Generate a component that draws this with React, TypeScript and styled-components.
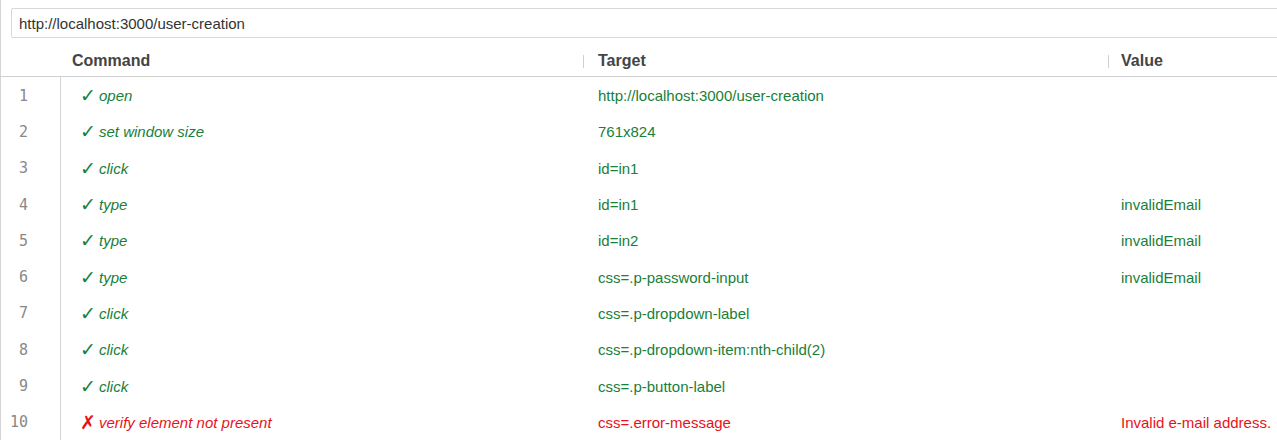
import React from 'react';
import styled, { createGlobalStyle } from 'styled-components';

const GlobalStyle = createGlobalStyle`
  html, body {
    margin: 0;
    padding: 0;
    background: #fff;
    font-family: "Liberation Sans", Arial, sans-serif;
    overflow: hidden;
  }
`;

type Step = {
  command: string;
  target: string;
  value?: string;
  failed?: boolean;
};

const steps: Step[] = [
  { command: 'open', target: 'http://localhost:3000/user-creation' },
  { command: 'set window size', target: '761x824' },
  { command: 'click', target: 'id=in1' },
  { command: 'type', target: 'id=in1', value: 'invalidEmail' },
  { command: 'type', target: 'id=in2', value: 'invalidEmail' },
  { command: 'type', target: 'css=.p-password-input', value: 'invalidEmail' },
  { command: 'click', target: 'css=.p-dropdown-label' },
  { command: 'click', target: 'css=.p-dropdown-item:nth-child(2)' },
  { command: 'click', target: 'css=.p-button-label' },
  { command: 'verify element not present', target: 'css=.error-message', value: 'Invalid e-mail address.', failed: true },
];

const Page = styled.div`
  height: 440px;
  border-left: 1px solid #d4d4d4;
  box-sizing: border-box;
  overflow: hidden;
`;

const UrlBar = styled.div`
  padding: 8px 0 6px 10px;
`;

const UrlInput = styled.div`
  width: 1300px;
  height: 30px;
  box-sizing: border-box;
  border: 1px solid #d8d8d8;
  border-radius: 2px;
  padding-left: 7px;
  display: flex;
  align-items: center;
  font-size: 15px;
  color: #333;
`;

const Grid = styled.div`
  display: grid;
  grid-template-columns: 60px 523px 525px 1fr;
`;

const HeaderRow = styled(Grid)`
  height: 33px;
  padding-top: 1px;
  box-sizing: border-box;
  border-bottom: 1px solid #cfcfcf;
  align-items: center;
`;

const HeaderCell = styled.div<{ $sep?: boolean; $pad: number }>`
  position: relative;
  padding-left: ${p => p.$pad}px;
  font-size: 16px;
  font-weight: bold;
  color: #444;
  &::before {
    content: '';
    display: ${p => (p.$sep ? 'block' : 'none')};
    position: absolute;
    left: -1px;
    top: 3px;
    width: 1px;
    height: 13px;
    background: #cfcfcf;
  }
`;

const Row = styled(Grid)`
  height: 36.3px;
  padding-top: 1px;
  box-sizing: border-box;
  align-items: center;
`;

const NumCell = styled.div`
  align-self: stretch;
  margin-top: -1px;
  display: flex;
  align-items: center;
  justify-content: flex-end;
  padding: 1px 32px 0 0;
  border-right: 1px solid #d4d4d4;
  font-family: "DejaVu Sans Mono", "Liberation Mono", monospace;
  font-size: 15px;
  color: #888;
`;

const CommandCell = styled.div<{ $failed?: boolean }>`
  display: flex;
  align-items: center;
  padding-left: 19px;
  font-size: 15px;
  font-style: italic;
  color: ${p => (p.$failed ? '#e8121b' : '#17803a')};
`;

const Mark = styled.span`
  font-family: "DejaVu Sans", sans-serif;
  font-style: normal;
  font-size: 19px;
  line-height: 1;
  width: 19px;
`;

const TextCell = styled.div<{ $failed?: boolean; $pad: number }>`
  padding-left: ${p => p.$pad}px;
  font-size: 15px;
  color: ${p => (p.$failed ? '#e8121b' : '#17803a')};
  white-space: nowrap;
`;

function App() {
  return (
    <Page>
      <GlobalStyle />
      <UrlBar>
        <UrlInput>http://localhost:3000/user-creation</UrlInput>
      </UrlBar>
      <HeaderRow>
        <div />
        <HeaderCell $pad={11}>Command</HeaderCell>
        <HeaderCell $sep $pad={14}>Target</HeaderCell>
        <HeaderCell $sep $pad={12}>Value</HeaderCell>
      </HeaderRow>
      {steps.map((s, i) => (
        <Row key={i}>
          <NumCell>{i + 1}</NumCell>
          <CommandCell $failed={s.failed}>
            <Mark>{s.failed ? '✗' : '✓'}</Mark>
            {s.command}
          </CommandCell>
          <TextCell $failed={s.failed} $pad={14}>{s.target}</TextCell>
          <TextCell $failed={s.failed} $pad={12}>{s.value}</TextCell>
        </Row>
      ))}
    </Page>
  );
}

export default App;
